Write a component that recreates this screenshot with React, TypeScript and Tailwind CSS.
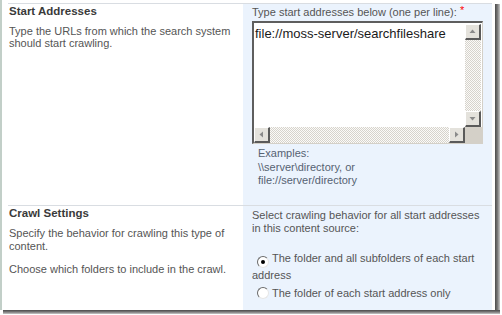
import React from "react";

function Arrow({ dir }: { dir: "up" | "down" | "left" | "right" }) {
  const pts =
    dir === "up"
      ? "0.5,5 3.5,1.5 6.5,5"
      : dir === "down"
      ? "0.5,2 3.5,5.5 6.5,2"
      : dir === "left"
      ? "5,0.5 1.5,3.5 5,6.5"
      : "2,0.5 5.5,3.5 2,6.5";
  return (
    <svg width="7" height="7" viewBox="0 0 7 7">
      <polygon points={pts} fill="#8a8a8a" />
    </svg>
  );
}

function SBtn({ dir }: { dir: "up" | "down" | "left" | "right" }) {
  return (
    <div className="w-[16px] h-[16px] shrink-0 bg-[#e4e2dc] border-t border-l border-t-[#ffffff] border-l-[#ffffff] border-r-2 border-b-2 border-r-[#5a5a5a] border-b-[#5a5a5a] flex items-center justify-center">
      <Arrow dir={dir} />
    </div>
  );
}

function Radio({ checked }: { checked?: boolean }) {
  return (
    <span className="inline-flex w-[12px] h-[12px] rounded-full bg-white border-[1.5px] border-t-[#6a6a6a] border-l-[#6a6a6a] border-b-[#e6e6e6] border-r-[#e6e6e6] items-center justify-center align-[-2px] ml-[5px] mr-[3px]">
      {checked && <span className="w-[4px] h-[4px] rounded-full bg-black" />}
    </span>
  );
}

const track =
  "bg-[repeating-conic-gradient(#d6d3cc_0_25%,#fbfaf8_0_50%)] bg-[length:2px_2px]";

export default function App() {
  return (
    <div className="w-[502px] h-[315px] bg-white overflow-hidden font-['Liberation_Sans',Arial,sans-serif] text-[11px] text-[#555555]">
      <div className="flex">
        <div className="w-[495px] h-[310px] border-l-2 border-l-[#c2cfc8] pl-[6px] pr-[3px] pt-[3px] flex flex-col">
          {/* Row 1 */}
          <div className="flex h-[202px] border-t border-t-[#d9dde2]">
            <div className="w-[235px] pl-[1px]">
              <div className="text-[11.5px] leading-[14px] font-bold text-[#3a3a3a]">Start Addresses</div>
              <div className="mt-[7px] leading-[12px]">
                Type the URLs from which the search system
                <br />
                should start crawling.
              </div>
            </div>
            <div className="w-[249px] bg-[#ebf3fd] pl-[9px]">
              <div className="leading-[13px] mt-[2px] whitespace-nowrap">
                Type start addresses below (one per line):{" "}
                <span className="text-[#ff0000] relative top-[-2px]">*</span>
              </div>
              <div className="mt-[2px] w-[231px] h-[123px] border-t-2 border-l-2 border-t-[#5e5e5e] border-l-[#5e5e5e] border-r border-b border-r-[#d4d0c8] border-b-[#d4d0c8] bg-white flex flex-col">
                <div className="flex flex-1 min-h-0">
                  <div className="flex-1 pl-[1px] pt-[3px] text-[13px] leading-[15px] text-[#1a1a1a] whitespace-nowrap">
                    file://moss-server/searchfileshare
                  </div>
                  <div className="w-[16px] mr-[1px] mt-[1px] flex flex-col">
                    <SBtn dir="up" />
                    <div className={"flex-1 " + track} />
                    <SBtn dir="down" />
                  </div>
                </div>
                <div className="h-[16px] flex">
                  <SBtn dir="left" />
                  <div className={"flex-1 " + track} />
                  <SBtn dir="right" />
                  <div className="w-[17px] h-[16px] bg-[#d4d0c8]" />
                </div>
              </div>
              <div className="mt-[3px] pl-[6px] leading-[13.5px] text-[#566272]">
                Examples:
                <br />
                \\server\directory, or
                <br />
                file://server/directory
              </div>
            </div>
          </div>
          {/* Row 2 */}
          <div className="flex flex-1 border-t border-t-[#d9dde2]">
            <div className="w-[235px] pl-[1px]">
              <div className="text-[11.5px] leading-[14px] font-bold text-[#3a3a3a]">Crawl Settings</div>
              <div className="mt-[7px] leading-[13px]">
                Specify the behavior for crawling this type of
                <br />
                content.
              </div>
              <div className="mt-[10px] leading-[13px]">Choose which folders to include in the crawl.</div>
            </div>
            <div className="w-[249px] bg-[#ebf3fd] pl-[9px]">
              <div className="mt-[3px] leading-[12.5px]">
                Select crawling behavior for all start addresses
                <br />
                in this content source:
              </div>
              <div className="mt-[17px] leading-[14px]">
                <Radio checked />
                The folder and all subfolders of each start
                <br />
                address
              </div>
              <div className="mt-[4px] leading-[14px]">
                <Radio />
                The folder of each start address only
              </div>
            </div>
          </div>
        </div>
        <div className="w-[5px] h-[306px] mt-[4px] bg-[linear-gradient(to_right,#4a4a4a,#7a7a7a,#c8c8c8)]" />
      </div>
      <div className="ml-[3px] w-[497px] h-[4px] bg-[linear-gradient(to_bottom,#4a4a4a,#7a7a7a,#c8c8c8)]" />
    </div>
  );
}
